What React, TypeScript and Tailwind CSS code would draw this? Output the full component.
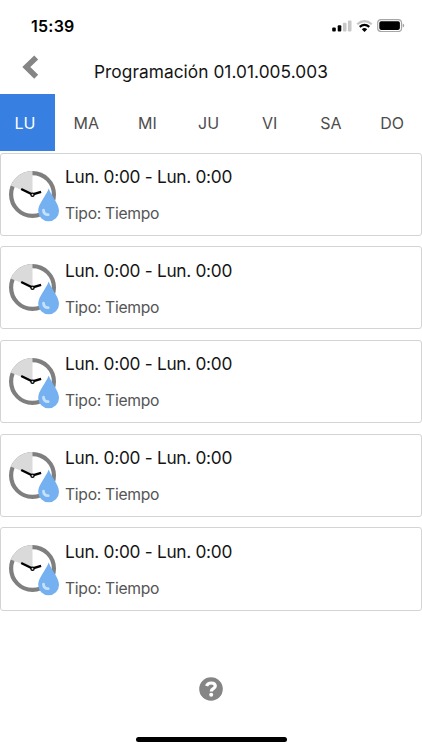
import React from "react";

const days = ["MA", "MI", "JU", "VI", "SA", "DO"];

const programs = [
  { id: 1, time: "Lun. 0:00 - Lun. 0:00", type: "Tipo: Tiempo" },
  { id: 2, time: "Lun. 0:00 - Lun. 0:00", type: "Tipo: Tiempo" },
  { id: 3, time: "Lun. 0:00 - Lun. 0:00", type: "Tipo: Tiempo" },
  { id: 4, time: "Lun. 0:00 - Lun. 0:00", type: "Tipo: Tiempo" },
  { id: 5, time: "Lun. 0:00 - Lun. 0:00", type: "Tipo: Tiempo" },
];

const StatusBar = () => (
  <div className="h-[51px] shrink-0 flex items-center justify-between pl-[31px] pr-[17px]">
    <span className="text-[16px] leading-5 tracking-[0.25px] font-semibold text-black">15:39</span>
    <div className="flex items-center">
      {/* Signal */}
      <svg className="w-5 h-3" viewBox="0 0 20 12">
        <rect x="0.2" y="7.4" width="3.6" height="4.2" rx="1" fill="#000" />
        <rect x="5.7" y="5.2" width="3.6" height="6.4" rx="1" fill="#000" />
        <rect x="10.9" y="2.8" width="3.6" height="8.8" rx="1" fill="#c8c8c8" />
        <rect x="15.9" y="0.4" width="3.6" height="11.2" rx="1" fill="#c8c8c8" />
      </svg>
      {/* Wifi */}
      <svg className="w-[17px] h-3 ml-1" viewBox="0 0 17 12" fill="none">
        <path d="M1.2 4.2Q8.5 -2 15.8 4.2" stroke="#c4c4c4" strokeWidth="2.1" />
        <path d="M3.7 6.9Q8.5 3 13.3 6.9" stroke="#000" strokeWidth="2.2" />
        <path d="M5.8 9.2Q8.5 7 11.2 9.2L8.5 12z" fill="#000" />
      </svg>
      {/* Battery */}
      <svg className="w-7 h-[13px] ml-1" viewBox="0 0 28 13">
        <rect x="0.7" y="0.7" width="23.8" height="11.8" rx="3.3" fill="none" stroke="#a6a6a6" strokeWidth="1.2" />
        <rect x="2.3" y="2.3" width="20.6" height="8.6" rx="1.8" fill="#000" />
        <path d="M25.7 4.6q1.5.5 1.5 2t-1.5 2z" fill="#a0a0a0" />
      </svg>
    </div>
  </div>
);

const ProgramIcon = () => (
  <svg className="w-[52px] h-[54px] mt-[5px] shrink-0" viewBox="0 0 52 54" fill="none">
    <circle cx="24.5" cy="24.5" r="21.4" stroke="#7f7f7f" strokeWidth="4.2" />
    <path d="M24.5 24.5L2.7 15.5A23.6 23.6 0 0 1 24.5 0.9z" fill="#dadada" />
    <path d="M13.2 19L24.5 24.5L33.1 21.8" stroke="#000" strokeWidth="2.4" />
    <circle cx="24.5" cy="24.7" r="1.6" fill="#ddd" stroke="#000" strokeWidth="1.3" />
    <path
      d="M40.7 18.4C37.4 27 30.2 33.5 30.2 40.9A10.4 10.4 0 0 0 51 40.9C51 33.5 44 27 40.7 18.4z"
      fill="#75b0f0"
    />
    <path d="M35.5 40.2C35.6 42.8 37.4 44.6 40.2 44.7" stroke="#c5e1fc" strokeWidth="2.8" strokeLinecap="round" />
  </svg>
);

const App = () => {
  return (
    <main className="w-[422px] h-[750px] bg-white overflow-hidden flex flex-col font-['Inter',sans-serif]">
      <StatusBar />

      {/* Header */}
      <header className="h-[43px] shrink-0 flex items-center pl-[22px]">
        <button className="w-[72px] h-[26px] -mt-[11px]">
          <svg className="w-[17px] h-[26px]" viewBox="0 0 17 26" fill="none">
            <path d="M14.2 3.4L4.3 13.1L14.2 22.8" stroke="#858585" strokeWidth="5.6" strokeLinejoin="miter" />
          </svg>
        </button>
        <h1 className="w-[240px] -mt-px text-[17.3px] leading-6 tracking-[0.05px] whitespace-nowrap text-[#141414]">
          Programación 01.01.005.003
        </h1>
      </header>

      {/* Days */}
      <nav className="h-[56.5px] shrink-0 flex text-[16px] text-[#4d4d4d]">
        <button className="w-[54.6px] pt-px pr-[4.5px] shrink-0 bg-[#3780e2] text-white">LU</button>
        {days.map((day) => (
          <button key={day} className="w-[61.2px] pt-px pl-[2px] shrink-0">
            {day}
          </button>
        ))}
      </nav>

      {/* Programs */}
      <section className="mt-[2px] shrink-0 flex flex-col gap-[10.4px]">
        {programs.map((program) => (
          <article
            key={program.id}
            className="h-[83.3px] flex items-center pl-[7px] border border-[#d4d4d4] rounded-[3px]"
          >
            <ProgramIcon />
            <div className="mt-[2.5px] ml-[5px]">
              <p className="text-[17.3px] leading-6 tracking-[-0.29px] text-[#141414]">{program.time}</p>
              <p className="mt-[13px] text-[15.7px] leading-6 tracking-[-0.3px] text-[#555]">{program.type}</p>
            </div>
          </article>
        ))}
      </section>

      {/* Help */}
      <button className="mt-[66px] mx-auto w-6 h-6 shrink-0">
        <svg className="w-6 h-6" viewBox="0 0 24 24" fill="none">
          <circle cx="12" cy="12" r="11.8" fill="#858585" />
          <path
            d="M7.6 9.1C8.3 7 9.8 6 12.2 6C14.8 6 16.3 7.3 16.3 9.1C16.3 11.9 12.3 11.5 12.3 14.4"
            stroke="#fff"
            strokeWidth="3.2"
          />
          <circle cx="12.2" cy="17.8" r="2" fill="#fff" />
        </svg>
      </button>

      <div className="mt-auto mb-[8px] mx-auto w-[151px] h-[5px] shrink-0 rounded-full bg-black" />
    </main>
  );
};

export default App;
